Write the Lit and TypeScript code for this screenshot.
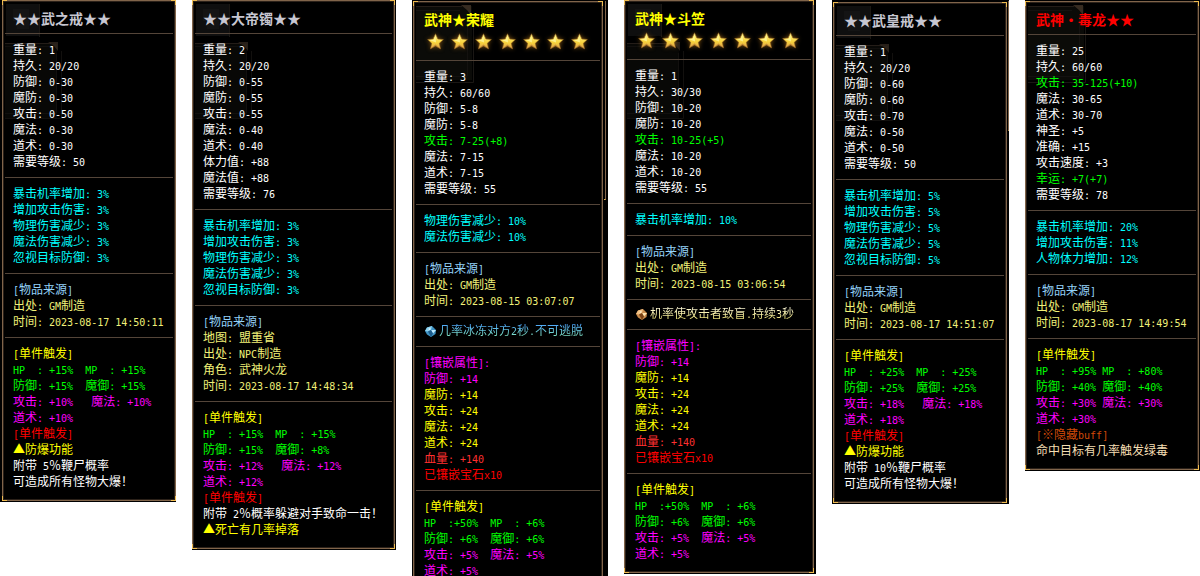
import { LitElement, html, svg, css } from "lit";
import { customElement, property } from "lit/decorators.js";
import { classMap } from "lit/directives/class-map.js";

type Tone =
  | "white" | "cyan" | "sky" | "khaki" | "yellow" | "green" | "magenta"
  | "red" | "rose" | "orange" | "peach";
type Row = [Tone, string];
interface Effect { gem: "ice" | "amber"; text: string }
interface Item {
  name: string;
  tone: "silver" | "gold" | "crimson";
  stars?: number;
  width: number;
  drop: 0 | 1 | 2;
  edge: "left" | "thin" | "wide" | "long" | "medium";
  texture: "tall" | "short";
  sections: (Row[] | Effect)[];
}

const rows = (tone: Tone, ...texts: string[]): Row[] => texts.map((t) => [tone, t] as Row);

const gems = (): Row[] => [
  ["magenta", "[镶嵌属性]:"],
  ["magenta", "防御: +14"],
  ["yellow", "魔防: +14"],
  ["yellow", "攻击: +24"],
  ["yellow", "魔法: +24"],
  ["yellow", "道术: +24"],
  ["rose", "血量: +140"],
  ["red", "已镶嵌宝石x10"],
];

const trigger = (a: string, b: string, c: string, d: string): Row[] => [
  ["yellow", "[单件触发]"],
  ["green", a],
  ["green", b],
  ["magenta", c],
  ["magenta", d],
];

const setTrigger = (): Row[] =>
  trigger("HP  :+50%  MP  : +6%", "防御: +6%  魔御: +6%", "攻击: +5%  魔法: +5%", "道术: +5%");

const source = (...texts: string[]): Row[] => [["sky", "[物品来源]"], ...rows("khaki", ...texts)];

const ITEMS: Item[] = [
  {
    name: "★★武之戒★★", tone: "silver", width: 176, drop: 0, edge: "left", texture: "tall",
    sections: [
      rows("white", "重量: 1", "持久: 20/20", "防御: 0-30", "魔防: 0-30", "攻击: 0-50", "魔法: 0-30", "道术: 0-30", "需要等级: 50"),
      rows("cyan", "暴击机率增加: 3%", "增加攻击伤害: 3%", "物理伤害减少: 3%", "魔法伤害减少: 3%", "忽视目标防御: 3%"),
      source("出处: GM制造", "时间: 2023-08-17 14:50:11"),
      [
        ...trigger("HP  : +15%  MP  : +15%", "防御: +15%  魔御: +15%", "攻击: +10%   魔法: +10%", "道术: +10%"),
        ["red", "[单件触发]"], ["yellow", "▲防爆功能"], ["white", "附带 5％鞭尸概率"], ["white", "可造成所有怪物大爆！"],
      ],
    ],
  },
  {
    name: "★★大帝镯★★", tone: "silver", width: 204, drop: 0, edge: "thin", texture: "tall",
    sections: [
      rows("white", "重量: 2", "持久: 20/20", "防御: 0-55", "魔防: 0-55", "攻击: 0-55", "魔法: 0-40", "道术: 0-40", "体力值: +88", "魔法值: +88", "需要等级: 76"),
      rows("cyan", "暴击机率增加: 3%", "增加攻击伤害: 3%", "物理伤害减少: 3%", "魔法伤害减少: 3%", "忽视目标防御: 3%"),
      source("地图: 盟重省", "出处: NPC制造", "角色: 武神火龙", "时间: 2023-08-17 14:48:34"),
      [
        ...trigger("HP  : +15%  MP  : +15%", "防御: +15%  魔御: +8%", "攻击: +12%   魔法: +12%", "道术: +12%"),
        ["red", "[单件触发]"], ["white", "附带 2％概率躲避对手致命一击！"], ["yellow", "▲死亡有几率掉落"],
      ],
    ],
  },
  {
    name: "武神★荣耀", tone: "gold", stars: 7, width: 196, drop: 1, edge: "long", texture: "short",
    sections: [
      [
        ...rows("white", "重量: 3", "持久: 60/60", "防御: 5-8", "魔防: 5-8"),
        ["green", "攻击: 7-25(+8)"],
        ...rows("white", "魔法: 7-15", "道术: 7-15", "需要等级: 55"),
      ],
      rows("cyan", "物理伤害减少: 10%", "魔法伤害减少: 10%"),
      source("出处: GM制造", "时间: 2023-08-15 03:07:07"),
      { gem: "ice", text: "几率冰冻对方2秒.不可逃脱" },
      gems(),
      setTrigger(),
    ],
  },
  {
    name: "武神★斗笠", tone: "gold", stars: 7, width: 192, drop: 0, edge: "wide", texture: "tall",
    sections: [
      [
        ...rows("white", "重量: 1", "持久: 30/30", "防御: 10-20", "魔防: 10-20"),
        ["green", "攻击: 10-25(+5)"],
        ...rows("white", "魔法: 10-20", "道术: 10-20", "需要等级: 55"),
      ],
      rows("cyan", "暴击机率增加: 10%"),
      source("出处: GM制造", "时间: 2023-08-15 03:06:54"),
      { gem: "amber", text: "机率使攻击者致盲.持续3秒" },
      gems(),
      setTrigger(),
    ],
  },
  {
    name: "★★武皇戒★★", tone: "silver", width: 177, drop: 2, edge: "medium", texture: "tall",
    sections: [
      rows("white", "重量: 1", "持久: 20/20", "防御: 0-60", "魔防: 0-60", "攻击: 0-70", "魔法: 0-50", "道术: 0-50", "需要等级: 50"),
      rows("cyan", "暴击机率增加: 5%", "增加攻击伤害: 5%", "物理伤害减少: 5%", "魔法伤害减少: 5%", "忽视目标防御: 5%"),
      source("出处: GM制造", "时间: 2023-08-17 14:51:07"),
      [
        ...trigger("HP  : +25%  MP  : +25%", "防御: +25%  魔御: +25%", "攻击: +18%   魔法: +18%", "道术: +18%"),
        ["red", "[单件触发]"], ["yellow", "▲防爆功能"], ["white", "附带 10％鞭尸概率"], ["white", "可造成所有怪物大爆！"],
      ],
    ],
  },
  {
    name: "武神·毒龙★★", tone: "crimson", width: 175, drop: 1, edge: "thin", texture: "short",
    sections: [
      [
        ...rows("white", "重量: 25", "持久: 60/60"),
        ["green", "攻击: 35-125(+10)"],
        ...rows("white", "魔法: 30-65", "道术: 30-70", "神圣: +5", "准确: +15", "攻击速度: +3"),
        ["green", "幸运: +7(+7)"],
        ["white", "需要等级: 78"],
      ],
      rows("cyan", "暴击机率增加: 20%", "增加攻击伤害: 11%", "人物体力增加: 12%"),
      source("出处: GM制造", "时间: 2023-08-17 14:49:54"),
      [
        ...trigger("HP  : +95% MP  : +80%", "防御: +40% 魔御: +40%", "攻击: +30% 魔法: +30%", "道术: +30%"),
        ["orange", "[※隐藏buff]"], ["peach", "命中目标有几率触发绿毒"],
      ],
    ],
  },
];

// Latin runs are set in a half-width monospace face so they line up with the full-width glyphs.
const mixed = (text: string) =>
  text.split(/([\x20-\x7e]+)/).map((part, i) =>
    part === "" ? "" : i % 2 ? html`<span class="latin">${part}</span>` : part);

const title = (text: string) =>
  text.split("·").map((part, i) => (i ? html`<span class="dot">·</span>${part}` : part));

const star = svg`
  <path d="M8.5 0.8 L10.9 6 L16.4 6.5 L12.3 10.3 L13.6 15.9 L8.5 13 L3.4 15.9 L4.7 10.3 L0.6 6.5 L6.1 6 Z"
    fill="url(#starGold)" stroke="#8a5a1c" stroke-width="0.6"/>
  <path d="M8.5 2.6 L9 9.500 L2.6 7 L6.8 6.8 Z" fill="#fff9a0" opacity="0.75"/>
  <path d="M8.5 11.500 L12 14.4 L8.5 12.600 L5 14.4 Z" fill="#a8682a" opacity="0.6"/>`;

const gemShape = {
  ice: svg`
    <path d="M3 2.5 L8 1 L12 5 L11.5 9 L7 12 L3 9.5 L1 6 Z" fill="#3f93c4"/>
    <path d="M3 2.5 L8 1 L7 5 L4 6.5 L1 6 Z" fill="#8fd3f0"/>
    <path d="M7 5 L12 5 L9 8.5 Z" fill="#bfeaff"/>
    <path d="M4 6.5 L7 5 L9 8.5 L7 12 Z" fill="#1d5c8c"/>
    <path d="M4.2 4 L6.5 3 L6 5 Z" fill="#eefaff"/>`,
  amber: svg`
    <path d="M3 2.5 L8 1 L12 5 L11.5 9 L7 12 L3 9.5 L1 6 Z" fill="#c98a4a"/>
    <path d="M3 2.5 L8 1 L7 5 L4 6.5 L1 6 Z" fill="#f2c083"/>
    <path d="M7 5 L12 5 L9 8.5 Z" fill="#ffe3ae"/>
    <path d="M4 6.5 L7 5 L9 8.5 L7 12 Z" fill="#7a4216"/>
    <path d="M4.2 4 L6.5 3 L6 5 Z" fill="#fff6dc"/>`,
};

const texture = {
  tall: svg`
    <rect x="3" y="3" width="33" height="32" fill="#0f0f0f"/>
    <path d="M10 8 H26 V28 H14 V20 H10 Z" fill="#141414"/>
    <path d="M36.500 3 V36" stroke="#1a1713" />
    <rect x="2" y="43" width="52" height="74" fill="#080806"/>
    <path d="M2 42.500 H48" stroke="#241d18"/>
    <path d="M2 45.500 H48 M53.500 52 V112 M2 112.500 H53" stroke="#12100e" fill="none"/>
    <path d="M58.500 50 V117.500 H2" stroke="#12100e" fill="none"/>
    <path d="M45 41 H55 V50 L51 45 Z" fill="#43352a" opacity="0.6"/>`,
  short: svg`
    <rect x="2" y="4" width="56" height="74" fill="#0b0b08"/>
    <path d="M2 4.500 H48" stroke="#241d18"/>
    <path d="M2 8.500 H46 M53.500 14 V74 M2 74.500 H53" stroke="#141210" fill="none"/>
    <path d="M59.500 12 V80.500 H2" stroke="#1a1714" fill="none"/>
    <path d="M47 3 H57 V13 L53 8 Z" fill="#4a3a2c" opacity="0.7"/>`,
};

@customElement("item-card")
export class ItemCard extends LitElement {
  @property({ attribute: false }) item!: Item;

  static styles = css`
    :host { display: block; }
    .shell { position: relative; background: #000; padding-bottom: 1px; }
    .left { padding-left: 2px; }
    .thin { padding-right: 1px; }
    .wide { padding-right: 2px; }
    .medium { padding-left: 1px; padding-right: 2px; }
    .long { padding-left: 1px; padding-right: 5px; }
    .drop1 { padding-top: 1px; }
    .drop2 { padding-top: 2px; }
    .frame {
      position: relative;
      border: 1px solid #80644a;
      box-shadow: inset 0 0 0 1px #2b2119;
      padding: 0 2px 3px;
    }
    .corner {
      position: absolute;
      width: 4px;
      height: 4px;
      border: 0 solid #f0bc50;
    }
    .tl { top: -1px; left: -1px; border-width: 1px 0 0 1px; }
    .tr { top: -1px; right: -1px; border-width: 1px 1px 0 0; }
    .bl { bottom: -1px; left: -1px; border-width: 0 0 1px 1px; }
    .br { bottom: -1px; right: -1px; border-width: 0 1px 1px 0; }
    .peek {
      position: absolute;
      top: 1px;
      right: 2px;
      width: 1px;
      height: 198px;
      border-right: 1px solid #80644a;
      border-bottom: 1px solid #e8b64c;
    }
    .medium .peek { right: 0; width: 0; height: 129px; }
    .texture {
      position: absolute;
      top: 0;
      left: 0;
      width: 62px;
      height: 122px;
    }
    .head { position: relative; padding: 7px 8px 5px; }
    .starred { padding-bottom: 9px; }
    .name {
      margin: 0;
      font-size: 14px;
      line-height: 20px;
      font-weight: 700;
      white-space: nowrap;
    }
    .dot { display: inline-block; width: 1em; text-align: center; }
    .silver { color: #c6c6d0; }
    .gold { color: #ffff00; }
    .crimson { color: #ff0000; }
    .stars { display: flex; gap: 7px; padding: 4px 3px 1px; }
    .stars svg { width: 17px; height: 17px; flex: none; filter: drop-shadow(0 0 2px #7a5010); }
    .block {
      position: relative;
      border-top: 1px solid #544539;
      padding: 7px 8px 8px;
    }
    .rows { margin: 0; padding: 0; list-style: none; }
    .row { height: 16px; line-height: 16px; white-space: pre; }
    .latin { font-family: "DejaVu Sans Mono", monospace; font-size: 10px; white-space: pre; }
    .effect { display: flex; align-items: center; gap: 2px; height: 14px; margin: 0; white-space: pre; }
    .effect svg { width: 13px; height: 13px; flex: none; }
    .glow { line-height: 16px; color: transparent; background-clip: text; -webkit-background-clip: text; }
    .ice { background-image: linear-gradient(#4aa2ff 10%, #6fd0d8 55%, #8ff0b0); }
    .amber { background-image: linear-gradient(#fffbe0 10%, #f8f0a0 55%, #f0e050); }
    .white { color: #ffffff; }
    .cyan { color: #00ffff; }
    .sky { color: #94d2f8; }
    .khaki { color: #f0f078; }
    .yellow { color: #ffff00; }
    .green { color: #00ff00; }
    .magenta { color: #ff00ff; }
    .red { color: #ff0000; }
    .rose { color: #ff3030; }
    .orange { color: #d24a08; }
    .peach { color: #f5deb3; }
  `;

  private section(s: Row[] | Effect) {
    if (Array.isArray(s)) {
      return html`<div class="block"><ul class="rows">
        ${s.map(([tone, text]) => html`<li class="row ${tone}">${mixed(text)}</li>`)}
      </ul></div>`;
    }
    return html`<div class="block"><p class="effect"><svg viewBox="0 0 13 13" aria-hidden="true">${gemShape[s.gem]}</svg><span class="glow ${s.gem}">${mixed(s.text)}</span></p></div>`;
  }

  render() {
    const it = this.item;
    const shell = {
      shell: true,
      [it.edge]: true,
      drop1: it.drop === 1,
      drop2: it.drop === 2,
    };
    const peek = it.edge === "long" || it.edge === "medium";
    return html`
      <article class=${classMap(shell)}>
        ${peek ? html`<span class="peek"></span>` : ""}
        <div class="frame">
          <svg class="texture" viewBox="0 0 62 122" aria-hidden="true">${texture[it.texture]}</svg>
          <span class="corner tl"></span><span class="corner tr"></span>
          <span class="corner bl"></span><span class="corner br"></span>
          <header class=${classMap({ head: true, starred: !!it.stars })}>
            <h2 class="name ${it.tone}">${title(it.name)}</h2>
            ${it.stars
              ? html`<div class="stars" role="img" aria-label="${it.stars}">
                  ${Array.from({ length: it.stars }, () => html`<svg viewBox="0 0 17 17">
                    <defs><linearGradient id="starGold" x1="0" y1="0" x2="0" y2="1">
                      <stop offset="0" stop-color="#fff48a"/><stop offset="0.6" stop-color="#f8d23c"/><stop offset="1" stop-color="#d89a50"/>
                    </linearGradient></defs>${star}</svg>`)}
                </div>`
              : ""}
          </header>
          ${it.sections.map((s) => this.section(s))}
        </div>
      </article>
    `;
  }
}

@customElement("app-root")
export class AppRoot extends LitElement {
  static styles = css`
    :host {
      display: block;
      height: 100vh;
      overflow: hidden;
      background: #fff;
      font-family: "Noto Sans CJK SC", sans-serif;
      font-size: 12px;
    }
    .board { display: flex; align-items: flex-start; gap: 16px; }
    .slot { flex-basis: 0; min-width: 172px; }
  `;

  render() {
    return html`<main class="board">
      ${ITEMS.map((item) => html`<item-card class="slot" style="flex-grow:${item.width}" .item=${item}></item-card>`)}
    </main>`;
  }
}
